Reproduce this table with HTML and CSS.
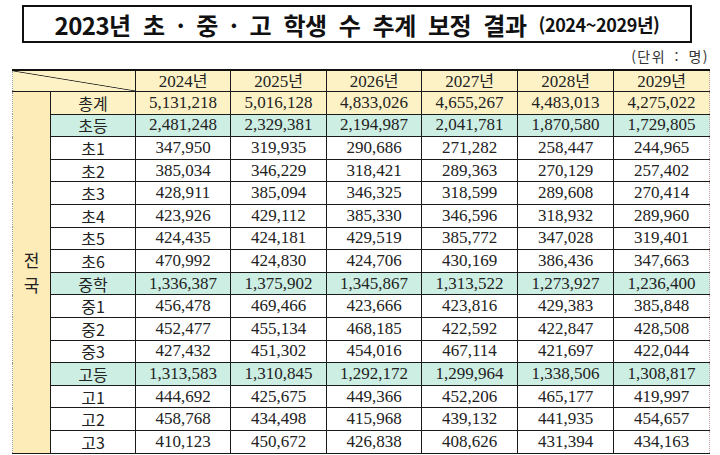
FILE: index.html
```html
<!DOCTYPE html>
<html lang="ko">
<head>
<meta charset="utf-8">
<link rel="stylesheet" href="styles.css">
</head>
<body>
<div class="page">
  <div class="title-box">
    <span class="title-main">2023년 초 · 중 · 고 학생 수 추계 보정 결과</span>
    <span class="title-sub">(2024~2029년)</span>
  </div>
  <div class="unit">(단위 : 명)</div>
  <table class="data">
    <colgroup>
      <col class="c-region"><col class="c-label">
      <col class="c-num"><col class="c-num2"><col class="c-num"><col class="c-num2"><col class="c-num2"><col class="c-num2">
    </colgroup>
    <thead>
      <tr class="head">
        <th class="diag" colspan="2"></th>
        <th>2024<span class="k">년</span></th>
        <th>2025<span class="k">년</span></th>
        <th>2026<span class="k">년</span></th>
        <th>2027<span class="k">년</span></th>
        <th>2028<span class="k">년</span></th>
        <th class="last">2029<span class="k">년</span></th>
      </tr>
    </thead>
    <tbody>
      <tr class="total">
        <td class="region" rowspan="16"><span>전</span><span>국</span></td>
        <td class="label">총계</td><td>5,131,218</td><td>5,016,128</td><td>4,833,026</td><td>4,655,267</td><td>4,483,013</td><td class="last">4,275,022</td>
      </tr>
      <tr class="sub"><td class="label">초등</td><td>2,481,248</td><td>2,329,381</td><td>2,194,987</td><td>2,041,781</td><td>1,870,580</td><td class="last">1,729,805</td></tr>
      <tr><td class="label">초1</td><td>347,950</td><td>319,935</td><td>290,686</td><td>271,282</td><td>258,447</td><td class="last">244,965</td></tr>
      <tr><td class="label">초2</td><td>385,034</td><td>346,229</td><td>318,421</td><td>289,363</td><td>270,129</td><td class="last">257,402</td></tr>
      <tr><td class="label">초3</td><td>428,911</td><td>385,094</td><td>346,325</td><td>318,599</td><td>289,608</td><td class="last">270,414</td></tr>
      <tr><td class="label">초4</td><td>423,926</td><td>429,112</td><td>385,330</td><td>346,596</td><td>318,932</td><td class="last">289,960</td></tr>
      <tr><td class="label">초5</td><td>424,435</td><td>424,181</td><td>429,519</td><td>385,772</td><td>347,028</td><td class="last">319,401</td></tr>
      <tr><td class="label">초6</td><td>470,992</td><td>424,830</td><td>424,706</td><td>430,169</td><td>386,436</td><td class="last">347,663</td></tr>
      <tr class="sub"><td class="label">중학</td><td>1,336,387</td><td>1,375,902</td><td>1,345,867</td><td>1,313,522</td><td>1,273,927</td><td class="last">1,236,400</td></tr>
      <tr><td class="label">중1</td><td>456,478</td><td>469,466</td><td>423,666</td><td>423,816</td><td>429,383</td><td class="last">385,848</td></tr>
      <tr><td class="label">중2</td><td>452,477</td><td>455,134</td><td>468,185</td><td>422,592</td><td>422,847</td><td class="last">428,508</td></tr>
      <tr><td class="label">중3</td><td>427,432</td><td>451,302</td><td>454,016</td><td>467,114</td><td>421,697</td><td class="last">422,044</td></tr>
      <tr class="sub"><td class="label">고등</td><td>1,313,583</td><td>1,310,845</td><td>1,292,172</td><td>1,299,964</td><td>1,338,506</td><td class="last">1,308,817</td></tr>
      <tr><td class="label">고1</td><td>444,692</td><td>425,675</td><td>449,366</td><td>452,206</td><td>465,177</td><td class="last">419,997</td></tr>
      <tr><td class="label">고2</td><td>458,768</td><td>434,498</td><td>415,968</td><td>439,132</td><td>441,935</td><td class="last">454,657</td></tr>
      <tr><td class="label">고3</td><td>410,123</td><td>450,672</td><td>426,838</td><td>408,626</td><td>431,394</td><td class="last">434,163</td></tr>
    </tbody>
  </table>
</div>
</body>
</html>
```

FILE: styles.css
```css
html, body {
  margin: 0;
  padding: 0;
  background: #ffffff;
}

.page {
  width: 720px;
  height: 455px;
  overflow: hidden;
}

.title-box {
  box-sizing: border-box;
  margin: 5px 28px 0 22px;
  height: 38px;
  border: 2px solid #111;
  display: flex;
  align-items: center;
  justify-content: center;
  gap: 12px;
  font-family: "Noto Sans CJK KR", "Noto Sans", sans-serif;
  font-weight: 700;
  color: #111;
}

.title-main {
  font-size: 24px;
  word-spacing: 6px;
  letter-spacing: -0.5px;
}

.title-sub {
  font-size: 18px;
  letter-spacing: -0.4px;
}

.unit {
  height: 26px;
  box-sizing: border-box;
  text-align: right;
  padding-right: 11px;
  padding-top: 4px;
  font-family: "Noto Sans CJK KR", sans-serif;
  font-size: 14px;
  line-height: 18px;
  color: #333;
  letter-spacing: 1.5px;
  word-spacing: 3px;
}

.data {
  margin-left: 12px;
  width: 697px;
  border-collapse: collapse;
  table-layout: fixed;
  font-family: "Liberation Serif", "Noto Sans CJK KR", serif;
  font-size: 17px;
  color: #222;
}

.c-region { width: 38px; }
.c-label { width: 85px; }
.c-num { width: 95px; }
.c-num2 { width: 96px; }

.data th,
.data td {
  border: 1px solid #1a1a1a;
  padding: 0;
  text-align: center;
  vertical-align: middle;
  font-weight: 400;
  line-height: 18px;
}

.data .k,
.data .label,
.data .region {
  font-family: "Noto Sans CJK KR", sans-serif;
}

.data .k {
  font-size: 16px;
}

.data .label {
  font-size: 16px;
}

.head th {
  height: 20px;
  background: #fdf2c6;
  border-top: 2px solid #111;
}

.head th.diag {
  border-left: 1px dotted #999;
  background:
    linear-gradient(to top right, transparent calc(50% - 0.8px), #222 50%, transparent calc(50% + 0.8px)),
    #fdf2c6;
}

.data tbody td {
  height: 21.6px;
}

.total td {
  background: #fdf2c6;
}

.sub td {
  background: #cdeee2;
}

.data td.region {
  background: #fdebb8;
  border-left: 1px dotted #999;
  font-size: 17px;
  line-height: 25px;
}

.region span {
  display: block;
}

.data .last {
  border-right: 1px dotted #c9a0a0;
}
```
